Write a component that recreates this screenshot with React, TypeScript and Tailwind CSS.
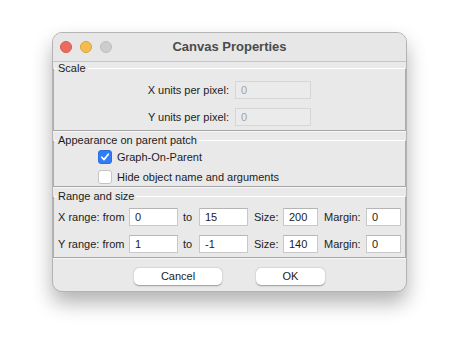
import React, { useState } from 'react';

const font = { fontFamily: '"Liberation Sans", Arial, sans-serif' };

const TextField = ({ value, width, disabled = false }: { value: string; width: string; disabled?: boolean }) => (
    <input
        value={value}
        disabled={disabled}
        readOnly
        className={`${width} h-[18px] px-[5px] text-[11px] leading-none outline-none border ${
            disabled
                ? 'bg-[#ebebeb] border-[#d6d6d6] text-[#a3a3a3]'
                : 'bg-white border-[#c9c9c9] border-t-[#b5b5b5] text-[#1c1c1c]'
        }`}
    />
);

const Group = ({ title, children, className = '' }: { title: string; children: React.ReactNode; className?: string }) => (
    <fieldset className={`border-x border-b border-t border-x-[#adadad] border-b-[#a4a4a4] border-t-white shadow-[0_1px_0_#f7f7f7] ${className}`}>
        <legend className="ml-[3px] pl-[1px] pr-[2px] text-[11px] leading-[12px] text-[#1c1c1c]">{title}</legend>
        {children}
    </fieldset>
);

const CheckRow = ({ label, checked, onToggle }: { label: string; checked: boolean; onToggle: () => void }) => (
    <div className="flex items-center h-[16px] pl-[44px]">
        <button
            onClick={onToggle}
            className={`w-[14px] h-[14px] rounded-[3px] flex items-center justify-center ${
                checked ? 'bg-[#2f7cf6] border border-[#2a6fdc]' : 'bg-white border border-[#c4c4c4]'
            }`}
        >
            {checked && (
                <svg width="10" height="10" viewBox="0 0 10 10">
                    <path d="M1.8 5.2 L4 7.6 L8.3 2.2" fill="none" stroke="white" strokeWidth="1.7" strokeLinecap="round" strokeLinejoin="round" />
                </svg>
            )}
        </button>
        <span className="ml-[5px] text-[11px] text-[#1c1c1c]">{label}</span>
    </div>
);

const App = () => {
    const [gop, setGop] = useState(true);
    const [hideName, setHideName] = useState(false);

    return (
        <div className="w-[459px] h-[357px] bg-white pt-[32px] pl-[52px]" style={font}>
            <div className="w-[355px] h-[260px] flex flex-col rounded-[10px] border border-[#b3b3b3] bg-[#e9e9e9] overflow-hidden shadow-[0_11px_20px_rgba(0,0,0,0.3)]">
                {/* title bar */}
                <div className="relative h-[29px] shrink-0 flex items-center border-b border-[#c6c6c6] bg-[#e7e7e7]">
                    <div className="flex gap-[8px] pl-[7px]">
                        <span className="w-[12px] h-[12px] rounded-full bg-[#ee6a5f] border border-[#d45a50]" />
                        <span className="w-[12px] h-[12px] rounded-full bg-[#f5bd4f] border border-[#d9a23f]" />
                        <span className="w-[12px] h-[12px] rounded-full bg-[#cdcdcd] border border-[#bdbdbd]" />
                    </div>
                    <div className="absolute inset-0 flex items-center justify-center text-[13px] font-bold text-[#4b4b4b] pointer-events-none">
                        Canvas Properties
                    </div>
                </div>

                <div className="flex flex-col px-0">
                    <Group title="Scale" className="pb-[4px]">
                        <div className="flex items-center mt-[7px]">
                            <span className="w-[181px] pr-[6px] text-right text-[11px] text-[#1c1c1c]">X units per pixel:</span>
                            <TextField value="0" width="w-[76px]" disabled />
                        </div>
                        <div className="flex items-center mt-[9px]">
                            <span className="w-[181px] pr-[6px] text-right text-[11px] text-[#1c1c1c]">Y units per pixel:</span>
                            <TextField value="0" width="w-[76px]" disabled />
                        </div>
                    </Group>

                    <Group title="Appearance on parent patch" className="mt-[3px] pb-[1px]">
                        <div className="flex flex-col gap-[4px] mt-[3px]">
                            <CheckRow label="Graph-On-Parent" checked={gop} onToggle={() => setGop(v => !v)} />
                            <CheckRow label="Hide object name and arguments" checked={hideName} onToggle={() => setHideName(v => !v)} />
                        </div>
                    </Group>

                    <Group title="Range and size" className="mt-[3px] pb-[4px]">
                        {[
                            { axis: 'X', from: '0', to: '15', size: '200', margin: '0' },
                            { axis: 'Y', from: '1', to: '-1', size: '140', margin: '0' },
                        ].map((r, i) => (
                            <div key={r.axis} className={`flex items-center pl-[4px] text-[11px] text-[#1c1c1c] ${i === 0 ? 'mt-[6px]' : 'mt-[9px]'}`}>
                                <span className="w-[71px]">{r.axis} range: from</span>
                                <TextField value={r.from} width="w-[49px]" />
                                <span className="w-[21px] pl-[5px]">to</span>
                                <TextField value={r.to} width="w-[49px]" />
                                <span className="w-[35px] pl-[6px]">Size:</span>
                                <TextField value={r.size} width="w-[35px]" />
                                <span className="w-[48px] pl-[6px]">Margin:</span>
                                <TextField value={r.margin} width="w-[35px]" />
                            </div>
                        ))}
                    </Group>

                    <div className="flex justify-center gap-[34px] mt-[10px]">
                        <button className="w-[88px] h-[17px] rounded-[5px] bg-white text-[11px] text-[#1c1c1c] leading-none shadow-[0_0.5px_1.5px_rgba(0,0,0,0.35)]">
                            Cancel
                        </button>
                        <button className="w-[69px] h-[17px] rounded-[5px] bg-white text-[11px] text-[#1c1c1c] leading-none shadow-[0_0.5px_1.5px_rgba(0,0,0,0.35)]">
                            OK
                        </button>
                    </div>
                </div>
            </div>
        </div>
    );
};

export default App;
